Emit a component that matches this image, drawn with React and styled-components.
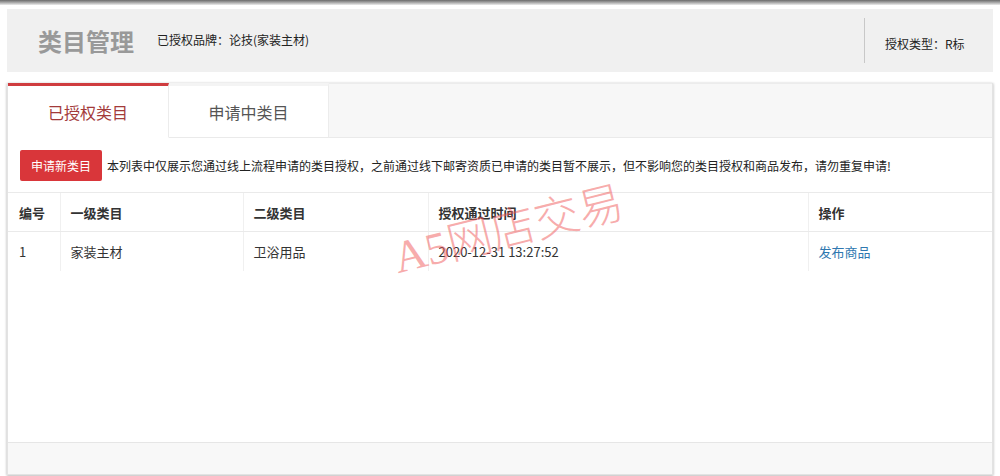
import React from "react";
import styled, { createGlobalStyle } from "styled-components";

const GlobalStyle = createGlobalStyle`
  html, body {
    margin: 0;
    padding: 0;
    background: #fff;
  }
  body {
    font-family: "Noto Sans CJK SC", "Noto Sans", "Liberation Sans", sans-serif;
    color: #333;
    font-size: 12px;
  }
`;

const rows = [
  { id: 1, first: "家装主材", second: "卫浴用品", time: "2020-12-31 13:27:52" },
];

export default function App() {
  return (
    <Page>
      <GlobalStyle />
      <TopEdge />
      <Body>
        <Header>
          <Title>类目管理</Title>
          <Brand>已授权品牌：论技(家装主材)</Brand>
          <AuthType>授权类型：R标</AuthType>
        </Header>

        <Panel>
          <Tabs>
            <Tab active>已授权类目</Tab>
            <Tab>申请中类目</Tab>
            <TabFill />
          </Tabs>

          <Notice>
            <ApplyButton>申请新类目</ApplyButton>
            <NoticeText>
              本列表中仅展示您通过线上流程申请的类目授权，之前通过线下邮寄资质已申请的类目暂不展示，但不影响您的类目授权和商品发布，请勿重复申请!
            </NoticeText>
          </Notice>

          <TableWrap>
            <Table>
              <colgroup>
                <col style={{ width: 52 }} />
                <col style={{ width: 183 }} />
                <col style={{ width: 185 }} />
                <col style={{ width: 380 }} />
                <col />
              </colgroup>
              <thead>
                <tr>
                  <Th>编号</Th>
                  <Th>一级类目</Th>
                  <Th>二级类目</Th>
                  <Th>授权通过时间</Th>
                  <Th>操作</Th>
                </tr>
              </thead>
              <tbody>
                {rows.map((r) => (
                  <tr key={r.id}>
                    <Td>{r.id}</Td>
                    <Td>{r.first}</Td>
                    <Td>{r.second}</Td>
                    <Td>{r.time}</Td>
                    <Td>
                      <Link href="#">发布商品</Link>
                    </Td>
                  </tr>
                ))}
              </tbody>
            </Table>
            <Watermark>A5网店交易</Watermark>
          </TableWrap>

          <Spacer />
          <Footer />
        </Panel>
      </Body>
    </Page>
  );
}

const Page = styled.div`
  width: 1000px;
  height: 476px;
  overflow: hidden;
  display: flex;
  flex-direction: column;
`;

const TopEdge = styled.div`
  height: 5px;
  background: linear-gradient(#6a6a6a, #b5b5b5 60%, #ececec);
  flex: none;
`;

const Body = styled.div`
  flex: 1;
  display: flex;
  flex-direction: column;
  padding: 4px 7px 1px 7px;
  min-height: 0;
`;

const Header = styled.div`
  height: 63px;
  flex: none;
  background: #f0f0f0;
  display: flex;
  align-items: center;
  padding-left: 31px;
`;

const Title = styled.h1`
  margin: 0;
  font-size: 24px;
  font-weight: 700;
  color: #999;
  line-height: 1;
`;

const Brand = styled.span`
  margin-left: 23px;
  font-size: 12px;
  color: #222;
  margin-top: -2px;
`;

const AuthType = styled.div`
  margin-left: auto;
  align-self: stretch;
  margin-top: 9px;
  margin-bottom: 9px;
  width: 108px;
  border-left: 1px solid #c8c8c8;
  padding-left: 20px;
  display: flex;
  align-items: center;
  padding-top: 6px;
  font-size: 12px;
  color: #222;
`;

const Panel = styled.div`
  margin-top: 11px;
  flex: 1;
  display: flex;
  flex-direction: column;
  border: 1px solid #e3e3e3;
  border-top: none;
  box-shadow: 0 2px 2px #d0d0d0, 1px 0 2px #e0e0e0, -1px 0 2px #e0e0e0;
  background: #fff;
  min-height: 0;
`;

const Tabs = styled.div`
  display: flex;
  height: 54px;
  flex: none;
  border-bottom: 1px solid #eaeaea;
`;

const Tab = styled.div`
  width: ${(p) => (p.active ? "161px" : "160px")};
  display: flex;
  align-items: center;
  justify-content: center;
  font-size: 16px;
  background: #fff;
  color: ${(p) => (p.active ? "#a33a3a" : "#555")};
  border-top: 3px solid ${(p) => (p.active ? "#cf3c3f" : "#f4f4f4")};
  border-right: 1px solid #ececec;
  box-sizing: border-box;
  margin-bottom: -1px;
  border-bottom: 1px solid ${(p) => (p.active ? "#fff" : "#eaeaea")};
`;

const TabFill = styled.div`
  flex: 1;
  background: #f7f7f7;
  border-top: 1px solid #ececec;
`;

const Notice = styled.div`
  display: flex;
  align-items: center;
  padding: 12px 12px 11px 12px;
`;

const ApplyButton = styled.button`
  width: 82px;
  height: 31px;
  border: none;
  border-radius: 2px;
  background: #d9363a;
  color: #fff;
  font-family: inherit;
  font-size: 12px;
  padding: 0;
  cursor: pointer;
`;

const NoticeText = styled.span`
  margin-left: 5px;
  font-size: 12px;
  color: #222;
  white-space: nowrap;
`;

const TableWrap = styled.div`
  position: relative;
`;

const Table = styled.table`
  width: 100%;
  border-collapse: collapse;
  table-layout: fixed;
`;

const Th = styled.th`
  height: 38px;
  text-align: left;
  font-weight: 700;
  font-size: 13px;
  color: #333;
  padding: 0 10px;
  border-top: 1px solid #eaeaea;
  border-bottom: 1px solid #eaeaea;
  border-left: 1px solid #f0f0f0;
  &:first-child {
    border-left: none;
    padding-left: 11px;
  }
`;

const Td = styled.td`
  height: 39px;
  font-size: 13px;
  color: #333;
  padding: 0 10px;
  border-left: 1px solid #f0f0f0;
  &:first-child {
    border-left: none;
    padding-left: 11px;
  }
`;

const Link = styled.a`
  color: #2f78b0;
  text-decoration: none;
`;

const Watermark = styled.div`
  position: absolute;
  left: 392px;
  top: 44px;
  transform: rotate(-14deg);
  transform-origin: left bottom;
  font-family: "Liberation Serif", "Noto Sans CJK SC", serif;
  font-size: 45px;
  font-weight: 300;
  color: rgba(240, 90, 90, 0.5);
  white-space: nowrap;
  pointer-events: none;
  line-height: 1;
`;

const Spacer = styled.div`
  flex: 1;
`;

const Footer = styled.div`
  height: 31px;
  flex: none;
  background: #f8f8f8;
  border-top: 1px solid #e6e6e6;
`;
